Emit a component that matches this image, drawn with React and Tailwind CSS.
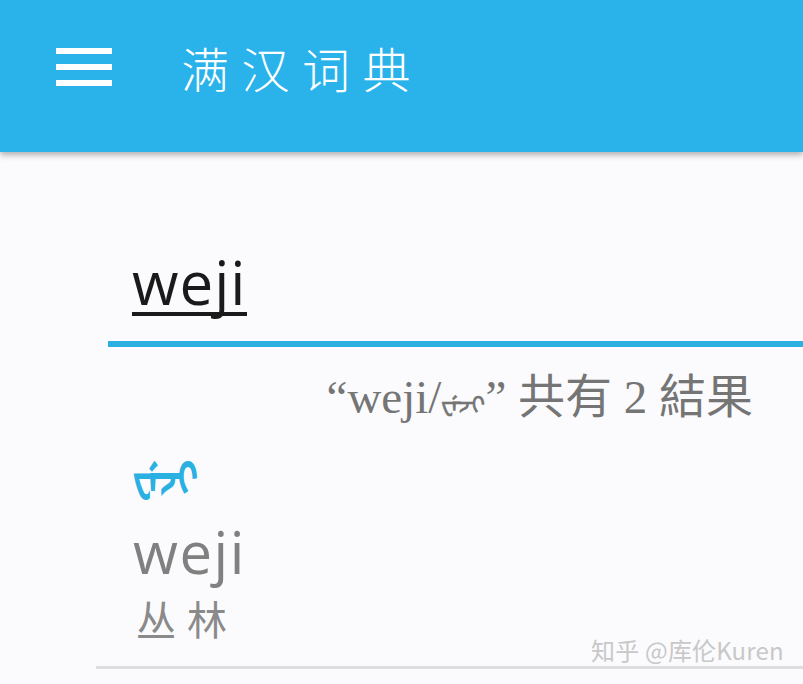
export default function App() {
  const cjk = '"Noto Sans CJK SC", "Liberation Sans", sans-serif';
  return (
    <div className="relative flex h-[684px] w-[803px] flex-col overflow-hidden bg-[#fbfbfd]">
      <header className="relative z-10 flex h-[152px] shrink-0 items-start bg-[#29b3ea] pl-[56px] pt-[48px] shadow-[0_3px_6px_rgba(0,0,0,0.3)]">
        <div className="flex h-[38px] w-[56px] flex-col justify-between">
          <span className="h-[6px] bg-white" />
          <span className="h-[6px] bg-white" />
          <span className="h-[6px] bg-white" />
        </div>
        <h1 className="ml-[69px] mt-[-16px] text-[48px] font-light leading-[70px] tracking-[12.5px] text-white" style={{ fontFamily: cjk }}>满汉词典</h1>
      </header>
      <div className="ml-[108px] flex h-[195px] shrink-0 flex-col border-b-[6px] border-[#2bb0e2] pl-[24px]">
        <div className="mt-[101px] w-[115px] border-b-[4px] border-[#1a1a1a]">
          <span className="block h-[59px] whitespace-nowrap text-[60px] leading-[59px] tracking-[1px] text-[#1a1a1a]" style={{ fontFamily: '"Open Sans", sans-serif', fontWeight: 400 }}>weji</span>
        </div>
      </div>
      <p className="mt-[18px] h-[64px] pr-[50px] text-right text-[47px] leading-[64px] text-[#757575]" style={{ fontFamily: '"Liberation Serif", "Noto Sans CJK TC", serif' }}>“weji/<span className="text-[24px] [-webkit-text-stroke:0.6px_#757575]">ᠸᡝᠵᡳ</span>” 共有 2 結果</p>
      <div className="ml-[96px] flex flex-1 flex-col pl-[37px]">
        <span className="mt-[22px] block h-[48px] origin-left scale-x-[0.8] text-[44px] leading-[48px] text-[#2bb0e2] [-webkit-text-stroke:2px_#2bb0e2]" style={{ fontFamily: cjk }}>ᠸᡝᠵᡳ</span>
        <span className="mt-[23px] h-[60px] text-[58px] leading-[60px] tracking-[1.5px] text-[#808080]" style={{ fontFamily: '"Open Sans", sans-serif', fontWeight: 400 }}>weji</span>
        <span className="ml-[3px] mt-[14px] h-[44px] text-[40px] font-normal leading-[44px] tracking-[11px] text-[#8a8a8a]" style={{ fontFamily: cjk }}>丛林</span>
        <div className="ml-[-37px] mt-[26px] h-[3px] bg-[#dedede]" />
      </div>
      <span className="absolute left-[591px] top-[635px] whitespace-nowrap text-[24px] leading-[30px] tracking-[0.2px] text-[#c8c8c8]" style={{ fontFamily: cjk }}>知乎 @库伦Kuren</span>
    </div>
  );
}
